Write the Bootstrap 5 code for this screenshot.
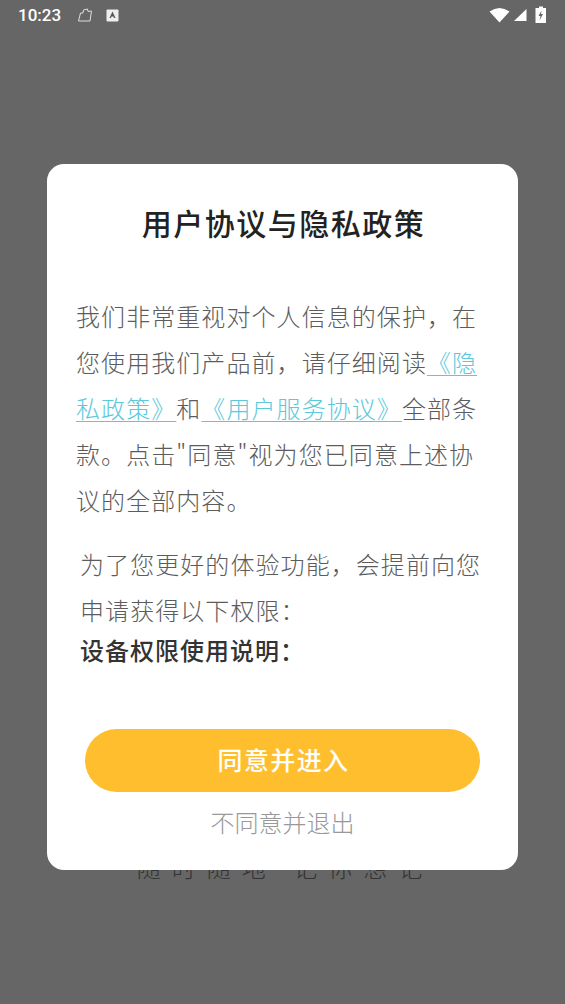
<!DOCTYPE html>
<html lang="zh"><head><meta charset="utf-8">
<link href="https://cdn.jsdelivr.net/npm/bootstrap@5.3.0/dist/css/bootstrap.min.css" rel="stylesheet">
<style>
html,body{height:1004px;overflow:hidden;background:#666;font-family:Roboto,"Noto Sans CJK SC",sans-serif}
.sbar{height:30px;padding:0 18px 0 18px;color:#fff}
.sbar-time{font-size:17px;font-weight:500;line-height:30px;margin-right:16px}
.sbar svg{display:block}
.sbar-right{gap:3px}
.sbar-gap{margin-right:13px}
.sbar-gap2{margin-left:5px}
.under-text{position:absolute;top:851px;left:0;width:565px;text-align:center;font-size:24px;line-height:32px;letter-spacing:11px;color:#333;padding-left:5px;font-weight:300;font-family:"Noto Sans CJK SC",sans-serif}
.dlg{position:absolute;left:47px;top:164px;width:471px;height:706px;border:0;border-radius:17px;background:#fff}
.dlg-title{font-size:30px;line-height:40px;font-weight:500;color:#222;text-align:center;margin:38px 0 0;padding-left:2px;letter-spacing:1.5px;font-family:"Noto Sans CJK SC",sans-serif}
.dlg-p{font-size:24px;letter-spacing:1.07px;line-height:46px;color:#5c5c5c;margin:0;padding:0 30px;font-weight:300;font-family:"Noto Sans CJK SC",sans-serif}
.dlg-p a{color:#5bc8dc;text-decoration:underline;text-underline-offset:3px;text-decoration-thickness:1px}
.p1{margin-top:51px;margin-left:-1px;padding-right:23px}
.p2{margin-top:18px;padding:0 28px 0 33px}
.dlg-b{font-size:24px;letter-spacing:1px;line-height:36px;font-weight:500;color:#333;margin:-1px 0 0;padding:0 33px;font-family:"Noto Sans CJK SC",sans-serif}
.btn-ok{display:block;width:395px;height:63px;margin:61px 0 0 38px;padding:0 0 2px 2px;border:0;border-radius:32px;background:#ffbe2e;color:#fff;font-size:25px;font-weight:500;letter-spacing:1.4px;font-family:"Noto Sans CJK SC",sans-serif}
.btn-ok:hover{background:#ffbe2e;color:#fff}
.dlg-no{font-size:24px;line-height:32px;color:#999;text-align:center;margin-top:14px;font-weight:300;font-family:"Noto Sans CJK SC",sans-serif}
</style></head>
<body class="position-relative">
<div class="sbar d-flex align-items-center">
  <span class="sbar-time">10:23</span>
  <svg width="16" height="15" viewBox="0 0 16 15" class="sbar-gap" fill="none" stroke="#ddd" stroke-width="1"><path d="M3.5 5 H6 L6.5 2 L10.5 1 L11 3.5 L14.5 3 L13 13 H1.5 Z"/></svg>
  <svg width="13" height="13" viewBox="0 0 13 13"><rect x="0.5" y="0.5" width="12" height="12" rx="1" fill="#eee"/><path d="M3.5 9 L6.5 2.5 L9.5 9 H8 L7.4 7.5 H5.6 L5 9Z" fill="#555"/></svg>
  <div class="ms-auto d-flex align-items-center sbar-right">
    <svg width="21" height="16" viewBox="0 0 21 16"><path d="M0.5 4.5 Q10.5 -2.5 20.5 4.5 L10.5 15.5Z" fill="#fff"/></svg>
    <svg width="14" height="14" viewBox="0 0 14 14"><path d="M13.5 1 V13 H1Z" fill="#fff"/></svg>
    <svg width="12" height="18" viewBox="0 0 12 18" class="sbar-gap2"><path d="M4 0.5h4v1.5h3v15h-10.5v-15h3.5z" fill="#fff"/><path d="M6.5 4.5 L3.5 10 H5.5 L4.5 14.5 L8 8 H6Z" fill="#666"/></svg>
  </div>
</div>
<div class="under-text">随时随地 记你想记</div>
<div class="card dlg">
  <h1 class="dlg-title">用户协议与隐私政策</h1>
  <p class="dlg-p p1">我们非常重视对个人信息的保护，在您使用我们产品前，请仔细阅读<a href="#">《隐私政策》</a>和<a href="#">《用户服务协议》</a>全部条款。点击"同意"视为您已同意上述协议的全部内容。</p>
  <p class="dlg-p p2">为了您更好的体验功能，会提前向您申请获得以下权限：</p>
  <p class="dlg-b">设备权限使用说明：</p>
  <button type="button" class="btn btn-ok">同意并进入</button>
  <div class="dlg-no">不同意并退出</div>
</div>
<script src="https://cdn.jsdelivr.net/npm/bootstrap@5.3.0/dist/js/bootstrap.bundle.min.js"></script>
</body></html>
